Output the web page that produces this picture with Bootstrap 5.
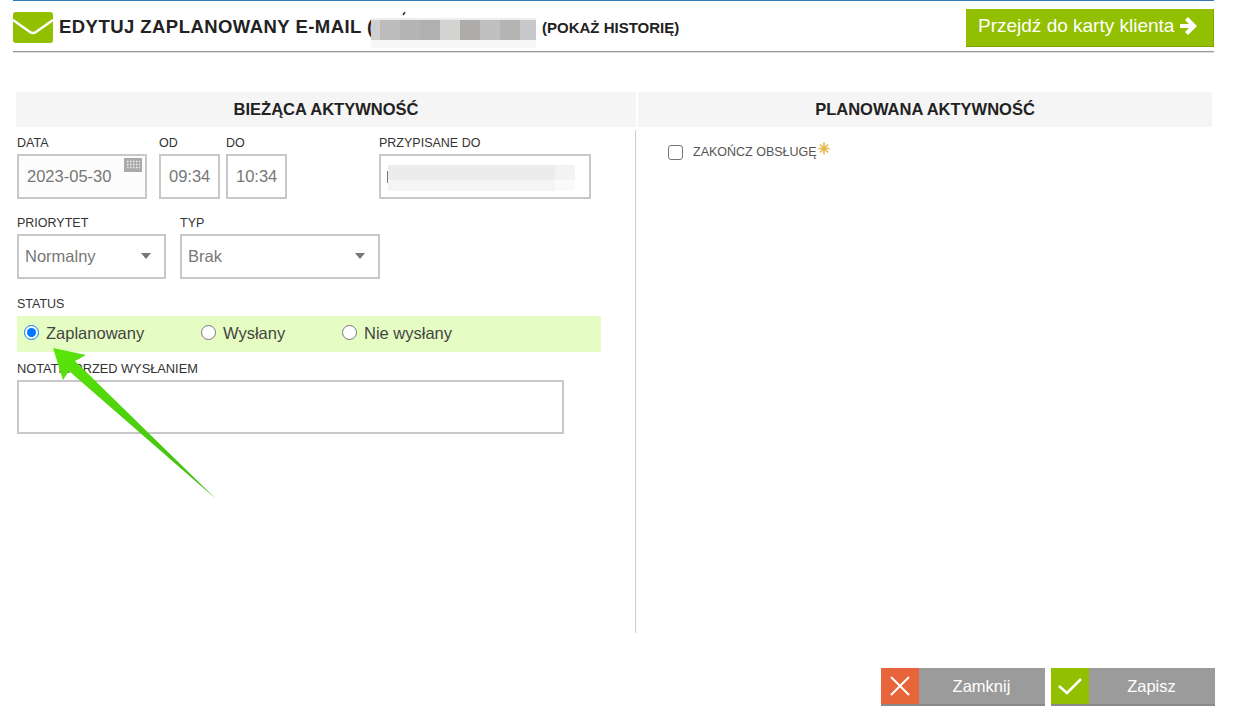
<!DOCTYPE html>
<html lang="pl">
<head>
  <meta charset="UTF-8" />
  <meta name="viewport" content="width=device-width, initial-scale=1.0" />
  <title>Edytuj zaplanowany e-mail</title>
  <link href="https://cdn.jsdelivr.net/npm/bootstrap@5.3.0/dist/css/bootstrap.min.css" rel="stylesheet" />
  <style>
    body { font-family: "Liberation Sans", Arial, sans-serif; background: #fff; color: #333; overflow: hidden; }
    .modal-wrap { width: 1241px; height: 720px; position: relative; }

    .top-bar { margin: 0 27px 0 13px; height: 52px; border-top: 1px solid #337ab7; border-bottom: 1px solid #999; box-shadow: 0 1px 0 #ddd; }
    .mail-icon { width: 40px; height: 31px; margin-top: 11px; flex: none; }
    .top-title { width: 312px; font-size: 18.5px; letter-spacing: .45px; font-weight: 700; color: #222; margin-left: 6px; margin-top: 16px; line-height: 20px; white-space: nowrap; flex: none; }
    .blur-title { width: 165px; height: 30px; margin: 17px 0 0 0; flex: none; overflow: visible; }
    .history { font-size: 15px; font-weight: 700; color: #222; margin: 18px 0 0 6px; line-height: 18px; white-space: nowrap; }
    .client-btn { background: #92c000; color: #fff; font-size: 19px; height: 38px; width: 248px; margin-top: 8px; border: 0; border-right: 1px solid #7fa600; border-bottom: 1px solid #7fa600; border-radius: 0; padding: 0 0 3px 12px; gap: 6px; }
    .client-btn:hover { background: #92c000; color: #fff; }

    .panels { margin: 40px 29px 0 16px; }
    .panel-left { width: 620px; flex: none; }
    .panel-right { width: 574px; flex: none; margin-left: 2px; }
    .panel-head { background: #f5f5f5; height: 35px; line-height: 35px; font-size: 16.5px; font-weight: 700; color: #222; text-align: center; }
    .panel-body-left { height: 503px; margin-top: 3px; border-right: 1px solid #ccc; }
    .field-label { display: block; font-size: 12.5px; line-height: 14px; color: #333; margin: 0 0 5px 1px; text-transform: uppercase; }
    .form-row-a { padding-top: 6px; height: 86px; }
    .form-row-a .field-label { margin-bottom: 4px; }
    .form-row-b { height: 81px; padding-top: 0; }
    .form-row-b .field-label { margin-bottom: 4px; }
    .label-flush { margin-left: 0; }

    .ctl { height: 45px; border: 2px solid #c8c8c8; border-radius: 0; font-size: 16.5px; color: #777; padding: 0; box-shadow: none; background-color: #fff; }
    .ctl-date { width: 130px; margin-left: 1px; padding-left: 8px; background: #fcfcfc; }
    .ctl-time { width: 61px; padding-left: 8px; }
    .ctl-assign { width: 212px; }
    .ctl-sel { padding: 0 0 0 6px; background-position: right 13px top 17px; background-size: 10px 6px; background-image: url("data:image/svg+xml,%3csvg xmlns='http://www.w3.org/2000/svg' viewBox='0 0 10 6'%3e%3cpath fill='%23777' d='M0 0h10L5 6z'/%3e%3c/svg%3e"); }
    .ctl-pri { width: 149px; margin-left: 1px; }
    .ctl-typ { width: 200px; }
    .cal-icon { position: absolute; right: 5px; top: 4px; width: 18px; height: 14px; }
    .blur-assign { position: absolute; left: 9px; top: 11px; width: 187px; height: 26px; }
    .caret-line { position: absolute; left: 8px; top: 17px; width: 1px; height: 12px; background: #887766; }

    .status-bar { background: #e5fdc2; height: 36px; margin-left: 1px; width: 584px; padding-left: 7px; font-size: 16.5px; color: #444; }
    .status-bar .form-check-input { appearance: auto; -webkit-appearance: auto; background: none; width: 15px; height: 15px; margin: 0 0 2px 0; border: 0; flex: none; }
    .status-opt { height: 36px; padding-bottom: 1px; }
    .status-opt label { margin-left: 7px; }
    .opt-a { width: 177px; }
    .opt-b { width: 141px; }
    .note { display: block; width: 547px; height: 54px; margin-left: 1px; border: 2px solid #c8c8c8; border-radius: 0; resize: none; }
    .label-note { font-size: 12.8px; margin-top: 10px; margin-bottom: 4px; }

    .finish-row { margin: 15px 0 0 30px; height: 20px; font-size: 12.5px; color: #555; }
    .finish-row .form-check-input { width: 15px; height: 15px; margin: 0; border: 1px solid #777; border-radius: 3px; flex: none; }
    .finish-row label { margin-left: 10px; text-transform: uppercase; }
    .star-ico { width: 12px; height: 13px; flex: none; align-self: flex-start; margin: 0 0 0 1px; }

    .foot-btn { width: 164px; height: 38px; background: #9b9b9b; color: #fff; font-size: 16.5px; border: 0; border-bottom: 2px solid #8a8a8a; border-radius: 0; padding: 0 1px 0 0; }
    .foot-btn:hover { background: #9b9b9b; color: #fff; }
    .foot-ico { width: 38px; height: 36px; flex: none; }
    .foot-ico svg { display: block; margin: auto; }
    .ico-x { background: #e8643a; }
    .ico-ok { background: #92c000; }
    .foot-row { margin: 35px 26px 0 0; gap: 6px; }

    .pointer-arrow { position: absolute; left: 50px; top: 345px; width: 170px; height: 158px; pointer-events: none; }
  </style>
</head>
<body>
  <div class="modal-wrap">
    <!-- naglowek -->
    <div class="top-bar d-flex">
      <svg class="mail-icon" viewBox="0 0 40 31">
        <rect width="40" height="31" rx="3" fill="#92c000" />
        <path d="M0 8 L17 20 Q20 22 23 20 L40 8" fill="none" stroke="#fff" stroke-width="2.500" />
      </svg>
      <div class="top-title">EDYTUJ ZAPLANOWANY E-MAIL (</div>
      <svg class="blur-title" viewBox="0 0 165 30">
        <path d="M32 -3 L34 -6" stroke="#333" stroke-width="1.500" />
        <rect x="0" y="0" width="165" height="2" fill="#eeeeee" />
        <rect x="0" y="22" width="165" height="8" fill="#f6f6f6" />
        <rect x="0" y="2" width="9" height="20" fill="#d0cfcf" />
        <rect x="9" y="2" width="20" height="20" fill="#bcbcbc" />
        <rect x="29" y="2" width="20" height="20" fill="#b4b4b4" />
        <rect x="49" y="2" width="20" height="20" fill="#b0b0b0" />
        <rect x="69" y="2" width="20" height="20" fill="#d3d3d1" />
        <rect x="89" y="2" width="20" height="20" fill="#aeacaa" />
        <rect x="109" y="2" width="20" height="20" fill="#c0c0c0" />
        <rect x="129" y="2" width="20" height="20" fill="#b6b3b3" />
        <rect x="149" y="2" width="16" height="20" fill="#c8c8ca" />
      </svg>
      <div class="history">(POKAŻ HISTORIĘ)</div>
      <button type="button" class="btn client-btn ms-auto d-flex align-items-center">
        Przejdź do karty klienta
        <svg width="17" height="18" viewBox="0 0 17 18"><path fill="#fff" d="M0 7h9L5 3l3-3 9 9-9 9-3-3 4-4H0z" /></svg>
      </button>
    </div>

    <div class="panels d-flex">
      <!-- biezaca aktywnosc -->
      <div class="panel-left">
        <div class="panel-head">BIEŻĄCA AKTYWNOŚĆ</div>
        <div class="panel-body-left">
          <div class="form-row-a d-flex">
            <div>
              <label class="field-label">Data</label>
              <div class="position-relative">
                <input class="form-control ctl ctl-date" value="2023-05-30" readonly />
                <svg class="cal-icon" viewBox="0 0 18 14">
                  <rect width="18" height="14" fill="#aaa" />
                  <path d="M3 3.500h13M3 6.500h13M3 9.500h13" stroke="#eee" stroke-width="1.500" stroke-dasharray="1.500 1.500" />
                </svg>
              </div>
            </div>
            <div style="margin-left:12px">
              <label class="field-label label-flush">Od</label>
              <input class="form-control ctl ctl-time" value="09:34" />
            </div>
            <div style="margin-left:6px">
              <label class="field-label label-flush">Do</label>
              <input class="form-control ctl ctl-time" value="10:34" />
            </div>
            <div style="margin-left:92px">
              <label class="field-label label-flush">Przypisane do</label>
              <div class="position-relative">
                <input class="form-control ctl ctl-assign" />
                <span class="caret-line"></span>
                <svg class="blur-assign" viewBox="0 0 187 26">
                  <rect width="187" height="15" fill="#ececec" />
                  <rect y="15" width="187" height="11" fill="#f5f5f5" />
                  <rect x="167" width="20" height="15" fill="#f3f3f3" />
                  <rect x="167" y="15" width="20" height="11" fill="#fafafa" />
                </svg>
              </div>
            </div>
          </div>

          <div class="form-row-b d-flex">
            <div>
              <label class="field-label">Priorytet</label>
              <select class="form-select ctl ctl-sel ctl-pri"><option>Normalny</option></select>
            </div>
            <div style="margin-left:14px">
              <label class="field-label label-flush">Typ</label>
              <select class="form-select ctl ctl-sel ctl-typ"><option>Brak</option></select>
            </div>
          </div>

          <label class="field-label">Status</label>
          <div class="status-bar d-flex">
            <div class="status-opt opt-a d-flex align-items-center">
              <input class="form-check-input" type="radio" name="st" id="st1" checked />
              <label for="st1">Zaplanowany</label>
            </div>
            <div class="status-opt opt-b d-flex align-items-center">
              <input class="form-check-input" type="radio" name="st" id="st2" />
              <label for="st2">Wysłany</label>
            </div>
            <div class="status-opt d-flex align-items-center">
              <input class="form-check-input" type="radio" name="st" id="st3" />
              <label for="st3">Nie wysłany</label>
            </div>
          </div>

          <label class="field-label label-note">Notatki przed wysłaniem</label>
          <textarea class="form-control note"></textarea>
        </div>
      </div>

      <!-- planowana aktywnosc -->
      <div class="panel-right">
        <div class="panel-head">PLANOWANA AKTYWNOŚĆ</div>
        <div class="finish-row d-flex align-items-center">
          <input class="form-check-input" type="checkbox" id="finish" />
          <label for="finish">Zakończ obsługę</label>
          <svg class="star-ico" viewBox="0 0 12 13"><path d="M6 .5v12M.5 6.500h11M2 2.500l8 8M10 2.500l-8 8" stroke="#e8b84a" stroke-width="1.600" /></svg>
        </div>
      </div>
    </div>

    <div class="foot-row d-flex justify-content-end">
      <button type="button" class="btn foot-btn d-flex align-items-center">
        <span class="foot-ico ico-x d-flex align-items-center">
          <svg width="22" height="22" viewBox="0 0 22 22"><path d="M2 2 L20 20 M20 2 L2 20" stroke="#fff" stroke-width="2" /></svg>
        </span>
        <span class="flex-grow-1 text-center">Zamknij</span>
      </button>
      <button type="button" class="btn foot-btn d-flex align-items-center">
        <span class="foot-ico ico-ok d-flex align-items-center">
          <svg width="24" height="18" viewBox="0 0 24 18"><path d="M1 9 L9 16 L23 2" fill="none" stroke="#fff" stroke-width="2.500" /></svg>
        </span>
        <span class="flex-grow-1 text-center">Zapisz</span>
      </button>
    </div>

    <!-- strzalka -->
    <svg class="pointer-arrow" viewBox="0 0 170 158">
      <defs>
        <linearGradient id="arrowGrad" x1="0" y1="0" x2="1" y2="1">
          <stop offset="0" stop-color="#5ae60a" />
          <stop offset="1" stop-color="#3fb80f" />
        </linearGradient>
      </defs>
      <path d="M3 3 L36 10 L25 16 L166 154 L19 26 L13 35 Z" fill="url(#arrowGrad)" />
    </svg>
  </div>

  <script src="https://cdn.jsdelivr.net/npm/bootstrap@5.3.0/dist/js/bootstrap.bundle.min.js"></script>
</body>
</html>
